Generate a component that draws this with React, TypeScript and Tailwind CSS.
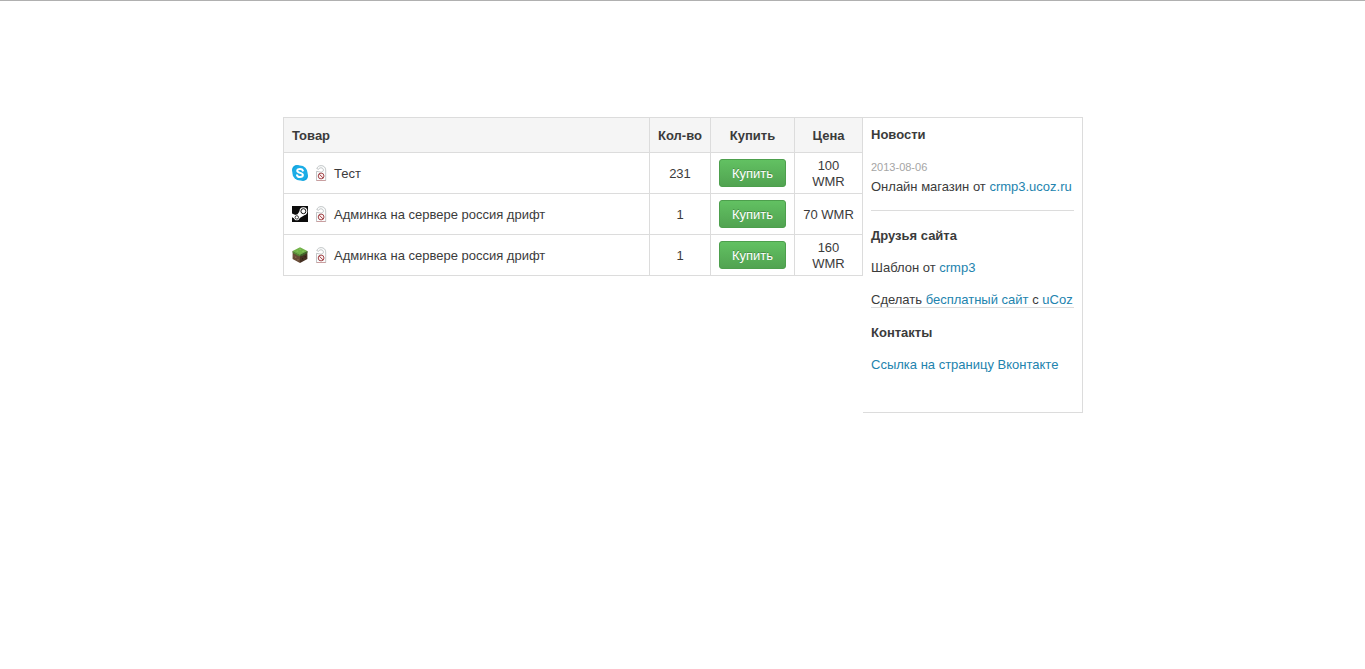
import React from 'react'


type IconName = 'skype' | 'steam' | 'minecraft'

interface Product {
  icon: IconName
  title: string
  count: number
  price: string
}


const products: Array<Product> = [
  { icon: 'skype', title: 'Тест', count: 231, price: '100 WMR' },
  { icon: 'steam', title: 'Админка на сервере россия дрифт', count: 1, price: '70 WMR' },
  { icon: 'minecraft', title: 'Админка на сервере россия дрифт', count: 1, price: '160 WMR' }
]


const SkypeIcon = () => (
  <svg className="size-4 shrink-0" viewBox="0 0 16 16" aria-hidden="true">
    <circle cx="5" cy="5" r="5" fill="#12a5e0" />
    <circle cx="11" cy="11" r="5" fill="#12a5e0" />
    <circle cx="8" cy="8" r="7.6" fill="#1cade6" />
    <path
      d="M10.9 5.6C10.5 4.4 9.400 4 8 4c-1.600 0-2.800.6-2.800 1.800 0 2.700 5.700 1.400 5.700 4.200 0 1.300-1.300 2-2.900 2-1.600 0-2.700-.6-3-1.800"
      fill="none" stroke="#fff" strokeWidth="2" strokeLinecap="round"
    />
  </svg>
)

const SteamIcon = () => (
  <svg className="size-4 shrink-0" viewBox="0 0 16 16" aria-hidden="true">
    <rect width="16" height="16" fill="#0c0c0c" />
    <path d="M0 7.6 4.6 9.4 7.6 5.2 13.6 8.6 7 12.4 4 13.4 0 11.2z" fill="#fff" />
    <circle cx="11.4" cy="5.2" r="3.9" fill="#fff" />
    <circle cx="11.4" cy="5.2" r="2.5" fill="#fff" stroke="#0c0c0c" strokeWidth="1" />
    <circle cx="4.8" cy="11.4" r="2.8" fill="#fff" />
    <circle cx="4.8" cy="11.4" r="1.7" fill="none" stroke="#0c0c0c" strokeWidth="0.8" />
  </svg>
)

const MinecraftIcon = () => (
  <svg className="size-4 shrink-0" viewBox="0 0 16 16" aria-hidden="true">
    <path d="M0.6 4 8 7.8V16L0.6 12z" fill="#664a36" />
    <path d="M15.4 4 8 7.8V16l7.4-4z" fill="#453022" />
    <path d="M8 0.2 15.4 4 8 8 0.6 4z" fill="#70b147" />
    <path d="M0.6 4 8 7.8v1.6L6.4 8.4v1L4.6 7.6v1L2.6 6.6v.8L0.6 5.6z" fill="#568a35" />
    <path d="M15.4 4 8 7.8v1.6L9.8 8.4v1l1.8-2v1l2-2v.8l1.8-1.4z" fill="#41682a" />
    <path d="M3 9.6h1.4V11H3zM5.4 12h1.2v1.4H5.4zM1.4 8.4h1v1.2h-1z" fill="#86664e" />
    <path d="M10 11h1.2v1.4H10zM12.6 9h1.2v1.4h-1.2z" fill="#2f1f14" />
    <path d="M6.6 2.2 8 1.6l1.6.8-1.4.7zM9.6 4.2l1.6-.8 1.4.7-1.6.8zM4 4l1.4-.6 1.4.6-1.4.7z" fill="#86c55e" />
  </svg>
)

// Door hanger with a small red "no entry" sign
const HangerIcon = () => (
  <svg className="size-4 shrink-0" viewBox="0 0 16 16" aria-hidden="true">
    <path
      d="M5.7 4.300C6 3.400 7 2.800 8 2.800c1.400 0 2.400 1 2.400 2.200S9.400 7.200 8 7.200C6.500 7.200 5.400 6.300 3.500 6.300v9.200h9.200V4.900C12.700 2.400 10.700.6 8.200.6 6 .6 4.400 1.800 3.800 3.600z"
      fill="#fcfdfd" stroke="#b3b8b9" strokeWidth="0.8" strokeLinejoin="round"
    />
    <path d="M3.500 15.500h9.200" stroke="#c99fa0" strokeWidth="1" />
    <circle cx="8.1" cy="11" r="2.9" fill="#fbf1f1" stroke="#a5484c" strokeWidth="1" />
    <path d="M6.200 9.100 10 12.900" stroke="#a5484c" strokeWidth="1" />
  </svg>
)

const productIcons = { skype: SkypeIcon, steam: SteamIcon, minecraft: MinecraftIcon }


const Link = ({ href, children }: { href: string, children: React.ReactNode }) => (
  <a href={href} className="text-[#2283ae] hover:underline">{children}</a>
)


const ProductRow = ({ product }: { product: Product }) => {
  const Icon = productIcons[product.icon]

  return (
    <tr className="h-[41px]">
      <td className="border border-[#dcdcdc] px-2">
        <div className="flex items-center gap-[5px]">
          <Icon />
          <HangerIcon />
          <span className="pt-px">{product.title}</span>
        </div>
      </td>
      <td className="border border-[#dcdcdc] px-2 pt-[5px] pb-[3px] text-center">{product.count}</td>
      <td className="border border-[#dcdcdc] px-2 text-center">
        <button
          type="button"
          className="block h-7 w-full rounded-[3px] border border-[#4d9f4d] bg-linear-to-b from-[#62c162] to-[#51a351] pt-px text-white text-shadow-[0_-1px_0_rgba(0,0,0,0.25)] hover:to-[#62c162]"
        >
          Купить
        </button>
      </td>
      <td className="border border-[#dcdcdc] px-2 pt-[5px] pb-[3px] text-center">{product.price}</td>
    </tr>
  )
}


const ProductTable = () => (
  <table className="w-full table-fixed border-collapse">
    <colgroup>
      <col />
      <col className="w-[61px]" />
      <col className="w-[84px]" />
      <col className="w-[68px]" />
    </colgroup>
    <thead>
      <tr className="bg-[#f5f5f5]">
        <th className="border border-[#dcdcdc] px-2 pt-[10px] pb-2 text-left">Товар</th>
        <th className="border border-[#dcdcdc] pt-[10px] pb-2">Кол-во</th>
        <th className="border border-[#dcdcdc] pt-[10px] pb-2">Купить</th>
        <th className="border border-[#dcdcdc] pt-[10px] pb-2">Цена</th>
      </tr>
    </thead>
    <tbody>
      {products.map((product, index) => <ProductRow product={product} key={index} />)}
    </tbody>
  </table>
)


const Sidebar = () => (
  <aside className="w-[220px] shrink-0 border-y border-r border-[#dcdcdc] px-2 pt-[9px] pb-[39px]">
    <section className="border-b border-[#dcdcdc] pb-[15px]">
      <h2 className="font-bold">Новости</h2>
      <p className="mt-4 text-[11px] text-[#a5a5a5]">2013-08-06</p>
      <p className="mt-1 whitespace-nowrap">Онлайн магазин от <Link href="#shop">crmp3.ucoz.ru</Link></p>
    </section>
    <section className="mt-[17px] h-20 border-b border-[#dcdcdc]">
      <h2 className="font-bold">Друзья сайта</h2>
      <p className="mt-4">Шаблон от <Link href="#template">crmp3</Link></p>
      <p className="mt-4 whitespace-nowrap">
        Сделать <Link href="#free">бесплатный сайт</Link> с <Link href="#ucoz">uCoz</Link>
      </p>
    </section>
    <section className="mt-[17px]">
      <h2 className="font-bold">Контакты</h2>
      <p className="mt-4"><Link href="#vk">Ссылка на страницу Вконтакте</Link></p>
    </section>
  </aside>
)


const App = () => (
  <div className="min-h-screen border-t border-[#b0b0b0] bg-white pt-29 pr-4 pl-[17px] font-['Liberation_Sans',Arial,sans-serif] text-[13px] leading-4 text-[#3b3b3b]">
    <main className="mx-auto flex max-w-[800px] items-start">
      <div className="min-w-0 flex-1">
        <ProductTable />
      </div>
      <Sidebar />
    </main>
  </div>
)


export default App
